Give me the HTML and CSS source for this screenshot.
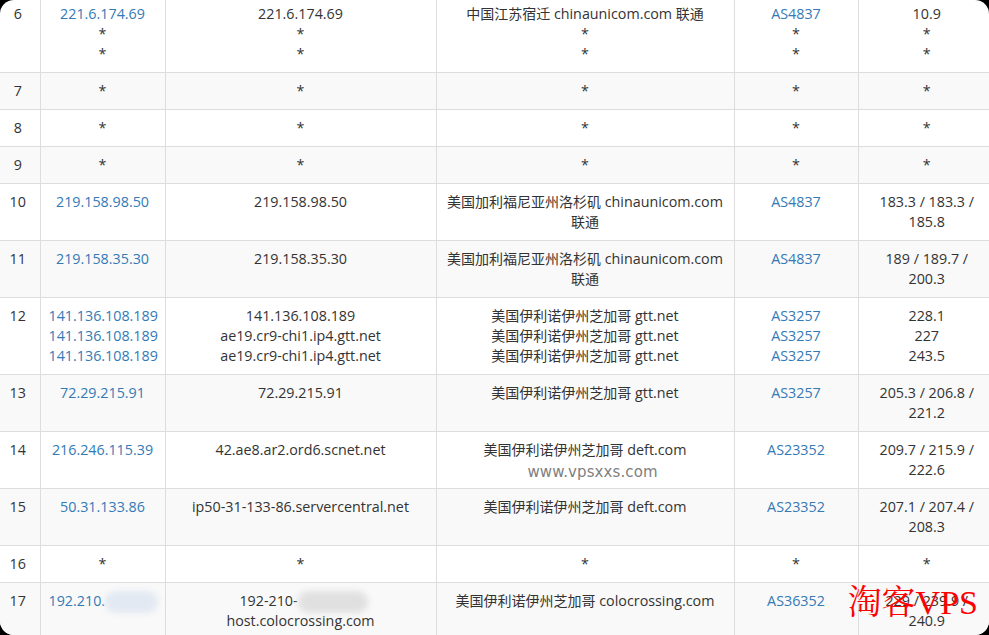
FILE: index.html
```html
<!DOCTYPE html>
<html lang="zh">
<head>
<meta charset="utf-8">
<title>Traceroute</title>
<link rel="stylesheet" href="styles.css">
</head>
<body>
<main class="frame">
<table class="trace">
<colgroup><col class="c-hop"><col class="c-ip"><col class="c-host"><col class="c-geo"><col class="c-as"><col class="c-rtt"></colgroup>
<tbody>
<tr class="r6"><td class="hop">6</td><td><a>221.6.174.69</a><br>*<br>*</td><td>221.6.174.69<br>*<br>*</td><td><span class="zh">中国江苏宿迁</span> chinaunicom.com <span class="zh">联通</span><br>*<br>*</td><td><a>AS4837</a><br>*<br>*</td><td>10.9<br>*<br>*</td></tr>
<tr><td class="hop">7</td><td>*</td><td>*</td><td>*</td><td>*</td><td>*</td></tr>
<tr><td class="hop">8</td><td>*</td><td>*</td><td>*</td><td>*</td><td>*</td></tr>
<tr><td class="hop">9</td><td>*</td><td>*</td><td>*</td><td>*</td><td>*</td></tr>
<tr><td class="hop">10</td><td><a>219.158.98.50</a></td><td>219.158.98.50</td><td><span class="zh">美国加利福尼亚州洛杉矶</span> chinaunicom.com<br><span class="zh">联通</span></td><td><a>AS4837</a></td><td>183.3 / 183.3 /<br>185.8</td></tr>
<tr><td class="hop">11</td><td><a>219.158.35.30</a></td><td>219.158.35.30</td><td><span class="zh">美国加利福尼亚州洛杉矶</span> chinaunicom.com<br><span class="zh">联通</span></td><td><a>AS4837</a></td><td>189 / 189.7 /<br>200.3</td></tr>
<tr><td class="hop">12</td><td><a>141.136.108.189</a><br><a>141.136.108.189</a><br><a>141.136.108.189</a></td><td>141.136.108.189<br>ae19.cr9-chi1.ip4.gtt.net<br>ae19.cr9-chi1.ip4.gtt.net</td><td><span class="zh">美国伊利诺伊州芝加哥</span> gtt.net<br><span class="zh">美国伊利诺伊州芝加哥</span> gtt.net<br><span class="zh">美国伊利诺伊州芝加哥</span> gtt.net</td><td><a>AS3257</a><br><a>AS3257</a><br><a>AS3257</a></td><td>228.1<br>227<br>243.5</td></tr>
<tr><td class="hop">13</td><td><a>72.29.215.91</a></td><td>72.29.215.91</td><td><span class="zh">美国伊利诺伊州芝加哥</span> gtt.net</td><td><a>AS3257</a></td><td>205.3 / 206.8 /<br>221.2</td></tr>
<tr><td class="hop">14</td><td><a>216.246.115.39</a></td><td>42.ae8.ar2.ord6.scnet.net</td><td class="mark-cell"><span class="zh">美国伊利诺伊州芝加哥</span> deft.com<div class="site-mark">www.vpsxxs.com</div></td><td><a>AS23352</a></td><td>209.7 / 215.9 /<br>222.6</td></tr>
<tr><td class="hop">15</td><td><a>50.31.133.86</a></td><td>ip50-31-133-86.servercentral.net</td><td><span class="zh">美国伊利诺伊州芝加哥</span> deft.com</td><td><a>AS23352</a></td><td>207.1 / 207.4 /<br>208.3</td></tr>
<tr><td class="hop">16</td><td>*</td><td>*</td><td>*</td><td>*</td><td>*</td></tr>
<tr><td class="hop">17</td><td><a>192.210.</a><i class="blur blur-ip"></i></td><td>192-210-<i class="blur blur-host"></i><br>host.colocrossing.com</td><td><span class="zh">美国伊利诺伊州芝加哥</span> colocrossing.com</td><td><a>AS36352</a></td><td>229 / 239.9 /<br>240.9</td></tr>
</tbody>
</table>
<div class="brand">淘客VPS</div>
</main>
</body>
</html>
```
FILE: styles.css
```css
html, body { margin: 0; padding: 0; background: #000; }
body { width: 989px; height: 635px; overflow: hidden; }
.frame {
  position: relative;
  width: 989px;
  height: 635px;
  overflow: hidden;
  border-radius: 14px;
  background: #fff;
}
.trace {
  table-layout: fixed;
  border-collapse: collapse;
  width: 989px;
  margin-top: -5px;
  font-family: "Open Sans", "Noto Sans CJK SC", sans-serif;
  font-size: 14.3px;
  line-height: 20px;
  color: #333;
}
.c-hop { width: 40px; }
.c-ip { width: 125px; }
.c-host { width: 271px; }
.c-geo { width: 298px; }
.c-as { width: 124px; }
.c-rtt { width: 131px; }
.trace td {
  padding: 8px;
  text-align: center;
  vertical-align: top;
  border: 1px solid #ddd;
  white-space: nowrap;
}
.trace tr:nth-child(even) td { background: #f9f9f9; }
.trace td:first-child { border-left: 0; }
.trace td:last-child { border-right: 0; padding-left: 14px; }
.trace td.hop { padding-left: 0; padding-right: 4px; }
.trace a { color: #337ab7; }
.zh { font-size: 14px; line-height: 1; font-family: "Noto Sans CJK SC", sans-serif; }
.mark-cell { position: relative; }
.site-mark {
  position: absolute;
  left: 91px;
  top: 30px;
  font-family: "DejaVu Sans", sans-serif;
  font-size: 15px;
  line-height: 20px;
  letter-spacing: 0.1px;
  color: #808080;
}
.blur {
  display: inline-block;
  height: 22px;
  margin-top: -2px;
  margin-bottom: -2px;
  vertical-align: middle;
  border-radius: 11px;
  filter: blur(3px);
}
.blur-ip { width: 53px; background: #e2e9f2; }
.blur-host { width: 70px; margin-right: -6px; background: #e0e0e0; }
.brand {
  position: absolute;
  right: 11px;
  bottom: 12px;
  font-family: "Liberation Serif", "Noto Serif CJK SC", "Noto Sans CJK SC", serif;
  font-size: 34px;
  line-height: 40px;
  color: #f00;
  white-space: nowrap;
}
```
